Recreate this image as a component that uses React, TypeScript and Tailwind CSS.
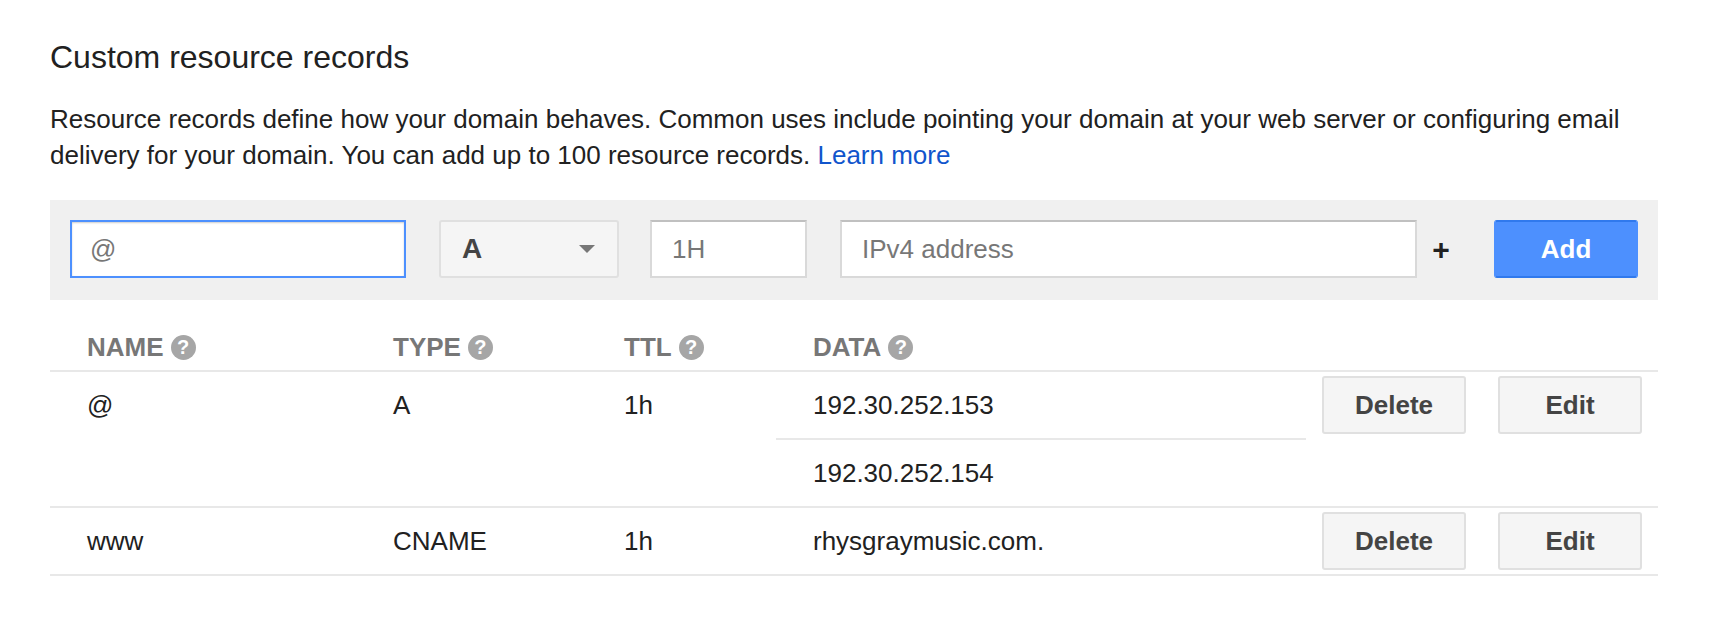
function HelpIcon() {
  return (
    <span className="ml-[7px] flex h-[25px] w-[25px] items-center justify-center rounded-full bg-[#a6a6a6] text-[20px] font-bold text-white">
      ?
    </span>
  )
}

function ColumnHead({ label, className }: { label: string; className: string }) {
  return (
    <div className={`flex items-center text-[26px] font-bold text-[#777777] ${className}`}>
      {label}
      <HelpIcon />
    </div>
  )
}

function RowButton({ label, className }: { label: string; className: string }) {
  return (
    <button className={`h-[58px] w-[144px] rounded-[3px] border-2 border-[#e0e0e0] bg-[#f5f5f5] text-[26px] font-bold text-[#444444] ${className}`}>
      {label}
    </button>
  )
}

function Actions() {
  return (
    <div className="flex w-[352px] shrink-0 pl-[16px]">
      <RowButton label="Delete" className="" />
      <RowButton label="Edit" className="ml-[32px]" />
    </div>
  )
}

export default function App() {
  return (
    <div className="h-[638px] bg-white px-[50px] pt-[36px] font-['Liberation_Sans',Arial,sans-serif] text-[#212121]">
      <h1 className="text-[32px] leading-[42px]">Custom resource records</h1>
      <p className="mt-[23px] w-[1600px] text-[26px] leading-[36px]">
        Resource records define how your domain behaves. Common uses include pointing your domain at your web server or configuring email delivery for your domain. You can add up to 100 resource records.{" "}
        <a className="text-[#1155cc]">Learn more</a>
      </p>

      {/* Add record bar */}
      <div className="mt-[27px] flex h-[100px] w-[1608px] items-center bg-[#f0f0f0] pb-[2px] pl-[20px] pr-[20px] text-[26px]">
        <div className="flex h-[58px] w-[336px] items-center border-2 border-[#4d90fe] bg-white pl-[18px] text-[#777777] shadow-[inset_0_1px_2px_rgba(0,0,0,0.2)]">
          @
        </div>
        <div className="ml-[33px] flex h-[58px] w-[180px] items-center justify-between rounded-[3px] border-2 border-[#e0e0e0] bg-[#f5f5f5] pl-[21px] pr-[22px] text-[28px] font-bold text-[#444444]">
          A
          <span className="h-0 w-0 border-x-[8px] border-t-[8px] border-x-transparent border-t-[#777777]" />
        </div>
        <div className="ml-[31px] flex h-[58px] w-[157px] items-center border-2 border-[#d9d9d9] border-t-[#c0c0c0] bg-white pl-[20px] text-[#777777]">
          1H
        </div>
        <div className="ml-[33px] flex h-[58px] w-[577px] items-center border-2 border-[#d9d9d9] border-t-[#c0c0c0] bg-white pl-[20px] text-[#777777]">
          IPv4 address
        </div>
        <span className="ml-[14px] w-[20px] text-center text-[30px] font-bold">+</span>
        <button className="ml-[43px] h-[58px] w-[144px] rounded-[3px] border-2 border-[#4d90fe] border-t-[#3079ed] border-b-[#3079ed] bg-[#4d90fe] font-bold text-white">
          Add
        </button>
      </div>

      {/* Records table */}
      <div className="w-[1608px]">
        <div className="flex h-[72px] items-center border-b-2 border-[#e8e8e8] pl-[37px] pt-[24px]">
          <ColumnHead label="NAME" className="w-[306px]" />
          <ColumnHead label="TYPE" className="w-[231px]" />
          <ColumnHead label="TTL" className="w-[189px]" />
          <ColumnHead label="DATA" className="" />
        </div>

        <div className="flex border-b-2 border-[#e8e8e8] pl-[37px] text-[26px]">
          <div className="w-[306px] pt-[15px] leading-[36px]">@</div>
          <div className="w-[231px] pt-[15px] leading-[36px]">A</div>
          <div className="w-[152px] pt-[15px] leading-[36px]">1h</div>
          <div className="w-[530px] shrink-0">
            <div className="h-[68px] border-b-2 border-[#e8e8e8] pl-[37px] pt-[15px] leading-[36px]">192.30.252.153</div>
            <div className="h-[66px] pl-[37px] pt-[15px] leading-[36px]">192.30.252.154</div>
          </div>
          <div className="pt-[4px]">
            <Actions />
          </div>
        </div>

        <div className="flex h-[68px] border-b-2 border-[#e8e8e8] pl-[37px] text-[26px]">
          <div className="w-[306px] pt-[15px] leading-[36px]">www</div>
          <div className="w-[231px] pt-[15px] leading-[36px]">CNAME</div>
          <div className="w-[152px] pt-[15px] leading-[36px]">1h</div>
          <div className="w-[530px] shrink-0 pl-[37px] pt-[15px] leading-[36px]">rhysgraymusic.com.</div>
          <div className="pt-[4px]">
            <Actions />
          </div>
        </div>
      </div>
    </div>
  )
}
